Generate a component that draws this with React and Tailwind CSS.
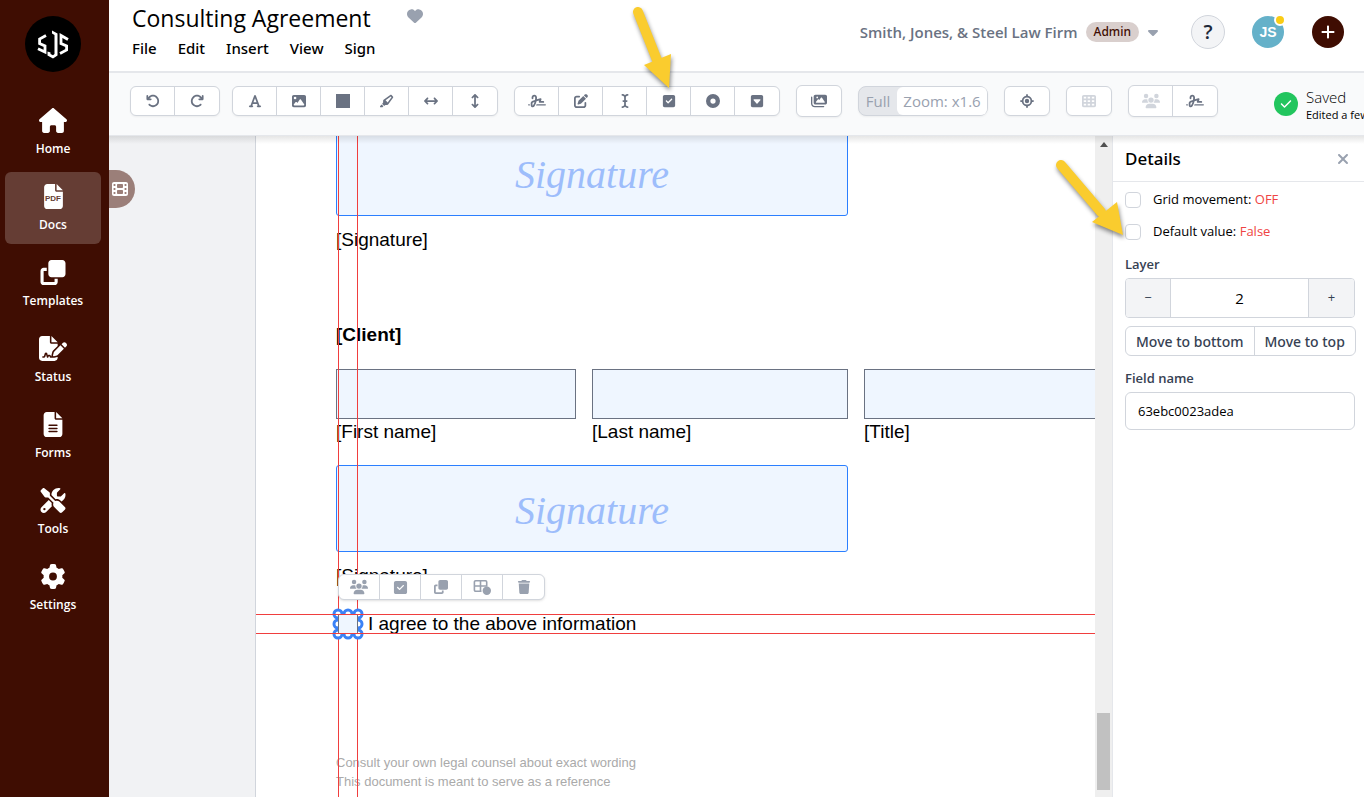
import {
  FaHouse, FaFile, FaClone, FaFileSignature, FaFileLines, FaScrewdriverWrench, FaGear,
  FaArrowRotateLeft, FaArrowRotateRight, FaFont, FaImage, FaSquareFull, FaHighlighter,
  FaArrowsLeftRight, FaArrowsUpDown, FaSignature, FaPenToSquare, FaICursor, FaSquareCheck,
  FaCircleDot, FaSquareCaretDown, FaImages, FaLocationCrosshairs, FaTableCells, FaUsers,
  FaFilm, FaHeart, FaCaretDown, FaPlus, FaXmark, FaCheck, FaTrash,
} from "react-icons/fa6";

function PdfFile({ className }) {
  return (
    <span className={"relative flex items-center justify-center " + className}>
      <FaFile className="size-[25px]" />
      <span className="absolute inset-x-0 top-[10px] text-center font-['Liberation_Sans_Narrow','Liberation_Sans',sans-serif] text-[8px] leading-[10px] font-bold text-[#653d34]">PDF</span>
    </span>
  );
}

const NAV = [
  { label: "Home", icon: FaHouse },
  { label: "Docs", icon: PdfFile, active: true },
  { label: "Templates", icon: FaClone },
  { label: "Status", icon: FaFileSignature },
  { label: "Forms", icon: FaFileLines },
  { label: "Tools", icon: FaScrewdriverWrench },
  { label: "Settings", icon: FaGear },
];

const HISTORY = [["Undo", FaArrowRotateLeft], ["Redo", FaArrowRotateRight]];
const CONTENT = [
  ["Text", FaFont], ["Image", FaImage], ["Shape", FaSquareFull],
  ["Highlight", FaHighlighter], ["Horizontal line", FaArrowsLeftRight], ["Vertical line", FaArrowsUpDown],
];
const FIELDS = [
  ["Signature field", FaSignature, "size-[18px]"], ["Text area", FaPenToSquare], ["Text field", FaICursor],
  ["Checkbox", FaSquareCheck], ["Radio", FaCircleDot], ["Dropdown", FaSquareCaretDown],
];

function GridDot(props) {
  return (
    <svg viewBox="0 0 18 16" width="18" height="16" fill="none" stroke="currentColor" strokeWidth="1.6" {...props}>
      <path d="M8.500 12.200H2.600A1.200 1.200 0 0 1 1.400 11V3A1.200 1.200 0 0 1 2.600 1.800H12.500A1.200 1.200 0 0 1 13.700 3V7H1.400M7.500 1.800V12.200" />
      <circle cx="13.800" cy="11.800" r="4.200" fill="currentColor" stroke="none" />
    </svg>
  );
}

const SELECTION = [
  ["Assign", FaUsers, "size-[18px]"], ["Check", FaSquareCheck, "size-[15px]"], ["Duplicate", FaClone, "size-[14px]"],
  ["Add to grid", GridDot, ""], ["Delete", FaTrash, "size-[14px]"],
];

function Group({ items }) {
  return (
    <div className="flex h-[30px] shrink-0 divide-x divide-gray-300 rounded-md border border-gray-300 bg-white text-gray-500 shadow-xs">
      {items.map(([label, Icon, size]) => (
        <button key={label} aria-label={label} className="flex w-11 items-center justify-center">
          <Icon className={size || "size-[14px]"} />
        </button>
      ))}
    </div>
  );
}

function Logo() {
  return (
    <svg viewBox="0 0 56 56" className="size-14" aria-label="SJS logo">
      <circle cx="28" cy="28" r="28" fill="#000" />
      <g fill="none" stroke="#fff" strokeWidth="2.8">
        <path d="M21 19.500 L14.600 23 V27.500 L20 30 V36 L13 32.800" />
        <path d="M43 23.500 L36 19.500 V27.500 L41.600 30 V34 L35 37.500" />
      </g>
      <path d="M27 14.500 L32.500 17.500 V39.500 L28 42.500 L22.500 39.500 V35.500 L25.500 36.500 V38 L28 39.300 L29.500 38 V19 L27 17.500 Z" fill="#fff" />
    </svg>
  );
}

function SignatureBox({ className = "" }) {
  return (
    <div className={"flex h-[87px] w-[512px] items-center justify-center rounded-[3px] border border-blue-500 bg-[#eff6ff] pt-1 font-['Liberation_Serif',serif] text-[40px] text-[#9dbdfb] italic " + className}>
      Signature
    </div>
  );
}

function FormField({ label, width }) {
  return (
    <label className={"flex shrink-0 flex-col leading-[26px] " + width}>
      <input type="text" className="h-[50px] w-full border border-gray-500 bg-[#eff6ff] px-2 outline-none" />
      <span>{label}</span>
    </label>
  );
}

const HANDLES = [[6, 6], [16, 6], [26, 6], [6, 16], [26, 16], [6, 26], [16, 26], [26, 26]];

function DocumentPage() {
  return (
    <article className="relative min-w-0 flex-1 overflow-hidden border-l border-gray-300 bg-white pl-20 font-['Liberation_Sans',Arial,sans-serif] text-[19px] leading-6 whitespace-nowrap text-black">
      <SignatureBox className="-mt-[7px]" />
      <p className="mt-3">[Signature]</p>
      <p className="mt-[71px] font-bold">[Client]</p>
      <div className="mt-[22px] flex gap-4">
        <FormField label="[First name]" width="w-60" />
        <FormField label="[Last name]" width="w-64" />
        <FormField label="[Title]" width="w-64" />
      </div>
      <SignatureBox className="mt-5" />
      <p className="mt-3">[Signature]</p>
      <label className="mt-6 flex w-fit items-center gap-2.5 pl-0.5">
        <input type="checkbox" className="size-5 appearance-none bg-[#eff6ff]" />
        I agree to the above information
      </label>
      <p className="mt-[117px] text-[13px] leading-[19px] text-[#aaaaaa]">
        Consult your own legal counsel about exact wording
        <br />
        This document is meant to serve as a reference
      </p>

      {/* Alignment guides for the selected field */}
      <div className="pointer-events-none absolute inset-y-0 left-[82px] w-px bg-[#f03e3e]" />
      <div className="pointer-events-none absolute inset-y-0 left-[101px] w-px bg-[#f03e3e]" />
      <svg viewBox="0 0 32 32" className="pointer-events-none absolute top-[472px] left-[76px] size-8" fill="none">
        {HANDLES.map(([x, y]) => (
          <circle key={x + "-" + y} cx={x} cy={y} r="4" stroke="#3b82f6" strokeWidth="3" fill="#fff" />
        ))}
        <rect x="6.500" y="6.500" width="19" height="19" fill="#eff6ff" stroke="#6b7280" />
      </svg>
      <div className="pointer-events-none absolute inset-x-0 top-[478px] h-px bg-[#f03e3e]" />
      <div className="pointer-events-none absolute inset-x-0 top-[497px] h-px bg-[#f03e3e]" />
      <div className="absolute top-[438px] left-[82px] flex h-[26px] divide-x divide-gray-300 rounded-md border border-gray-300 bg-white text-gray-400 shadow-sm">
        {SELECTION.map(([label, Icon, size]) => (
          <button key={label} aria-label={label} className="flex w-[41px] items-center justify-center">
            <Icon className={size} />
          </button>
        ))}
      </div>
    </article>
  );
}

function DetailsPanel() {
  return (
    <aside className="w-[252px] shrink-0 border-l border-gray-200 bg-white text-[13px] text-black">
      <div className="flex h-[46px] items-center justify-between border-b border-gray-200 pr-[13px] pl-3">
        <h2 className="font-['Noto_Sans',sans-serif] text-[17px] font-medium">Details</h2>
        <button aria-label="Close" className="text-gray-400"><FaXmark className="size-4" /></button>
      </div>
      <div className="px-3 pt-0.5">
        {[["Grid movement:", "OFF"], ["Default value:", "False"]].map(([name, value]) => (
          <label key={name} className="flex h-8 items-center gap-3">
            <input type="checkbox" className="size-4 appearance-none rounded-sm border border-gray-300 bg-white" />
            <span>{name} <span className="text-[#ef4444]">{value}</span></span>
          </label>
        ))}
        <label htmlFor="layer" className="block h-[30px] leading-8 font-semibold text-gray-700">Layer</label>
        <div className="flex h-10 w-[230px] divide-x divide-gray-300 overflow-hidden rounded-sm border border-gray-300">
          <button className="w-[45px] bg-gray-100 text-gray-700">−</button>
          <input id="layer" defaultValue="2" className="min-w-0 flex-1 text-center text-[15px] font-medium outline-none" />
          <button className="w-[45px] bg-gray-100 text-gray-700">+</button>
        </div>
        <div className="mt-2 flex h-[30px] w-fit divide-x divide-gray-300 rounded-md border border-gray-300 font-['Noto_Sans',sans-serif] text-[14px] font-medium whitespace-nowrap text-gray-700">
          <button className="px-2.5">Move to bottom</button>
          <button className="px-2.5">Move to top</button>
        </div>
        <label htmlFor="field-name" className="mt-3 block leading-5 font-semibold text-gray-700">Field name</label>
        <input id="field-name" defaultValue="63ebc0023adea" className="mt-1 h-[38px] w-[230px] rounded-md border border-gray-300 px-3 outline-none" />
      </div>
    </aside>
  );
}

function Pointer({ points, tail, join, className }) {
  return (
    <svg viewBox="0 0 76 90" width="76" height="90" className={"pointer-events-none absolute z-20 overflow-visible drop-shadow-[1px_3px_2px_rgba(0,0,0,0.45)] " + className} fill="#facc2e">
      <path d={"M" + tail + "L" + join} stroke="#facc2e" strokeWidth="10" strokeLinecap="round" />
      <polygon points={points} />
    </svg>
  );
}

export default function App() {
  return (
    <div className="relative flex h-screen overflow-hidden bg-white font-['Open_Sans','Segoe_UI',sans-serif] text-black">
      <nav className="flex w-[109px] shrink-0 flex-col items-center bg-[#3f0d02] pr-[3px] pt-4">
        <Logo />
        <div className="mt-6 flex w-24 flex-col gap-1">
          {NAV.map(({ label, icon: Icon, active }) => (
            <a key={label} href="#" className={"flex h-[72px] flex-col items-center rounded-md pt-3 text-xs font-semibold text-white " + (active ? "bg-[#653d34]" : "")}>
              <Icon className="h-[25px] w-7" />
              <span className="mt-2 leading-4">{label}</span>
            </a>
          ))}
        </div>
      </nav>

      <div className="flex min-w-0 flex-1 flex-col">
        <header className="flex h-[73px] shrink-0 items-start border-b-2 border-gray-200 pr-5 pl-[23px]">
          <div className="flex flex-col">
            <div className="flex h-9 items-center">
              <h1 className="text-[23px] font-normal whitespace-nowrap">Consulting Agreement</h1>
              <button aria-label="Favorite" className="mb-1 ml-9 text-gray-400"><FaHeart className="size-4" /></button>
            </div>
            <div className="flex h-6 items-center gap-[21px] font-['Noto_Sans',sans-serif] text-[15px] font-medium">
              {["File", "Edit", "Insert", "View", "Sign"].map((m) => <button key={m}>{m}</button>)}
            </div>
          </div>
          <div className="ml-auto flex h-16 items-center whitespace-nowrap">
            <span className="text-[15px] font-semibold text-gray-500">Smith, Jones, &amp; Steel Law Firm</span>
            <span className="ml-2 flex h-5 items-center rounded-full bg-[#d9cfcd] px-2 font-['Noto_Sans',sans-serif] text-xs font-medium text-[#3f0d02]">Admin</span>
            <button aria-label="Switch team" className="ml-1.5 text-gray-400"><FaCaretDown className="size-4" /></button>
            <button aria-label="Help" className="ml-[30px] flex size-[34px] items-center justify-center rounded-full border border-gray-300 bg-gray-100 text-[20px] font-semibold text-gray-800">?</button>
            <button className="relative ml-[27px] flex size-8 items-center justify-center rounded-full bg-[#65b1c9] font-['Liberation_Sans',sans-serif] text-[14px] font-bold text-white">
              JS
              <span className="absolute -top-0.5 -right-0.5 size-3 rounded-full border-2 border-white bg-[#facc15]" />
            </button>
            <button aria-label="New" className="ml-7 flex size-8 items-center justify-center rounded-full bg-[#3f0d02] text-white"><FaPlus className="size-4" /></button>
          </div>
        </header>

        <div className="relative z-10 flex h-[63px] shrink-0 items-start overflow-hidden border-b border-gray-200 bg-gray-50 pt-3 pl-[21px]">
          <div className="flex h-8 items-center gap-4">
            <div className="flex gap-3"><Group items={HISTORY} /><Group items={CONTENT} /></div>
            <Group items={FIELDS} />
            <button aria-label="Gallery" className="flex h-8 w-[46px] items-center justify-center rounded-md border border-gray-300 bg-white text-gray-500 shadow-xs"><FaImages className="size-4" /></button>
            <div className="flex h-[30px] w-[130px] rounded-lg border border-gray-300 bg-gray-200 text-[15px] whitespace-nowrap text-gray-400 shadow-xs">
              <button className="flex-1">Full</button>
              <button className="w-[90px] rounded-md bg-white">Zoom: x1.6</button>
            </div>
            <Group items={[["Locate", FaLocationCrosshairs]]} />
            <div className="flex h-[30px] w-[46px] rounded-md border border-gray-300 bg-white text-gray-300 shadow-xs">
              <button aria-label="Grid" className="flex flex-1 items-center justify-center"><FaTableCells className="size-[14px]" /></button>
            </div>
            <div className="flex h-8 divide-x divide-gray-300 rounded-md border border-gray-300 bg-white text-gray-500 shadow-xs">
              <button aria-label="Signers" className="flex w-11 items-center justify-center text-gray-300"><FaUsers className="size-[18px]" /></button>
              <button aria-label="Sign" className="flex w-11 items-center justify-center"><FaSignature className="size-[18px]" /></button>
            </div>
          </div>
          <div className="ml-14 flex items-center gap-2 whitespace-nowrap">
            <span className="flex size-6 shrink-0 items-center justify-center rounded-full bg-[#22c55e] text-white"><FaCheck className="size-3" /></span>
            <div className="pt-0.5 font-light">
              <p className="text-[15px] leading-5">Saved</p>
              <p className="text-[11px] leading-4 font-normal">Edited a few seconds ago</p>
            </div>
          </div>
        </div>

        <main className="relative flex min-h-0 flex-1">
          <div className="pointer-events-none absolute inset-x-0 top-0 z-10 h-2 bg-linear-to-b from-black/10 to-transparent" />
          <div className="w-[146px] shrink-0 bg-[#f1f2f4] pt-[34px]">
            <button aria-label="Pages" className="flex h-[38px] w-[26px] items-center justify-center rounded-r-full bg-[#9b7f79] pr-1 text-white"><FaFilm className="size-4 shrink-0" /></button>
          </div>
          <DocumentPage />
          <div className="flex w-[17px] shrink-0 flex-col items-center justify-between bg-[#efefef] pt-1.5 pb-[7px]">
            <svg viewBox="0 0 8 5" className="h-[5px] w-2"><path d="M0 5 4 0 8 5Z" fill="#505050" /></svg>
            <div className="h-[77px] w-[13px] bg-[#c1c1c1]" />
          </div>
          <DetailsPanel />
        </main>
      </div>

      <Pointer className="top-0 left-[600px]" tail="38 12" join="57 60" points="44,65 71,54 69,88" />
      <Pointer className="top-[150px] left-[1050px]" tail="11 15" join="51 62" points="42,72 67,52 73,85" />
    </div>
  );
}
